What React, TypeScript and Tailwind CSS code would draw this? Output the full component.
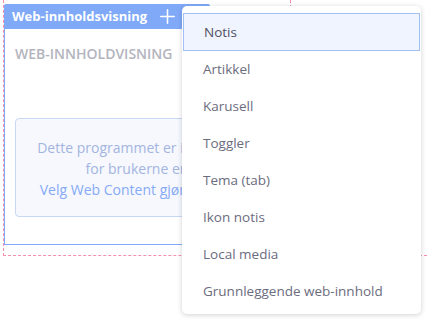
import { Plus } from 'lucide-react';

const items = [
  'Notis',
  'Artikkel',
  'Karusell',
  'Toggler',
  'Tema (tab)',
  'Ikon notis',
  'Local media',
  'Grunnleggende web-innhold',
];

export default function App() {
  return (
    <div
      className="relative h-[322px] w-[427px] overflow-hidden bg-white"
      style={{ fontFamily: '"Open Sans", "Noto Sans", sans-serif' }}
    >
      {/* drop zone */}
      <div className="pl-[3px]">
        <div className="flex h-[256px] border-b border-l border-dashed border-[#f590ac]">
          <div className="w-[287px] border-r border-dashed border-[#f590ac] pt-[4px]">
            {/* portlet topper */}
            <div className="flex h-[25px] w-[206px] items-center justify-between rounded-t-[2px] bg-[#80a9f8] pl-[8px] pr-[31px]">
              <span className="text-[13px] font-bold leading-none text-white">Web-innholdsvisning</span>
              <Plus className="h-[23px] w-[23px] text-white" strokeWidth={1.6} />
            </div>
            {/* portlet body */}
            <div className="h-[216px] border border-t-0 border-[#80a9f8] px-[10px] pt-[15px]">
              <div className="text-[14px] font-semibold leading-[19px] text-[#b3b4be]">
                WEB-INNHOLDVISNING
              </div>
              <div className="mt-[55px] h-[99px] rounded-[4px] border border-[#c8d7f4] bg-[#f6f8fe] pt-[18px] text-center text-[14px] leading-[21px] text-[#a3b5df]">
                <div className="pr-[10px]">Dette programmet er ikke synlig</div>
                <div>for brukerne ennå.</div>
                <div className="text-[#86aaf6]">Velg Web Content gjør det synlig.</div>
              </div>
            </div>
          </div>
        </div>
      </div>

      {/* dropdown menu */}
      <div className="absolute left-[182px] top-[6px] w-[239px] rounded-[5px] bg-white pt-[7px] pb-[4px] shadow-[0_1px_5px_rgba(40,40,60,0.22)]">
        {items.map((label, i) => (
          <div
            key={label}
            className={
              i === 0
                ? 'mx-[1px] flex h-[38px] items-center border border-[#a3c0f6] bg-[#eff4fe] pl-[20px] text-[13.5px] text-[#4f5060]'
                : 'flex h-[37px] items-center pl-[21px] text-[13.5px] text-[#6b6c7e]'
            }
          >
            {label}
          </div>
        ))}
      </div>
    </div>
  );
}
